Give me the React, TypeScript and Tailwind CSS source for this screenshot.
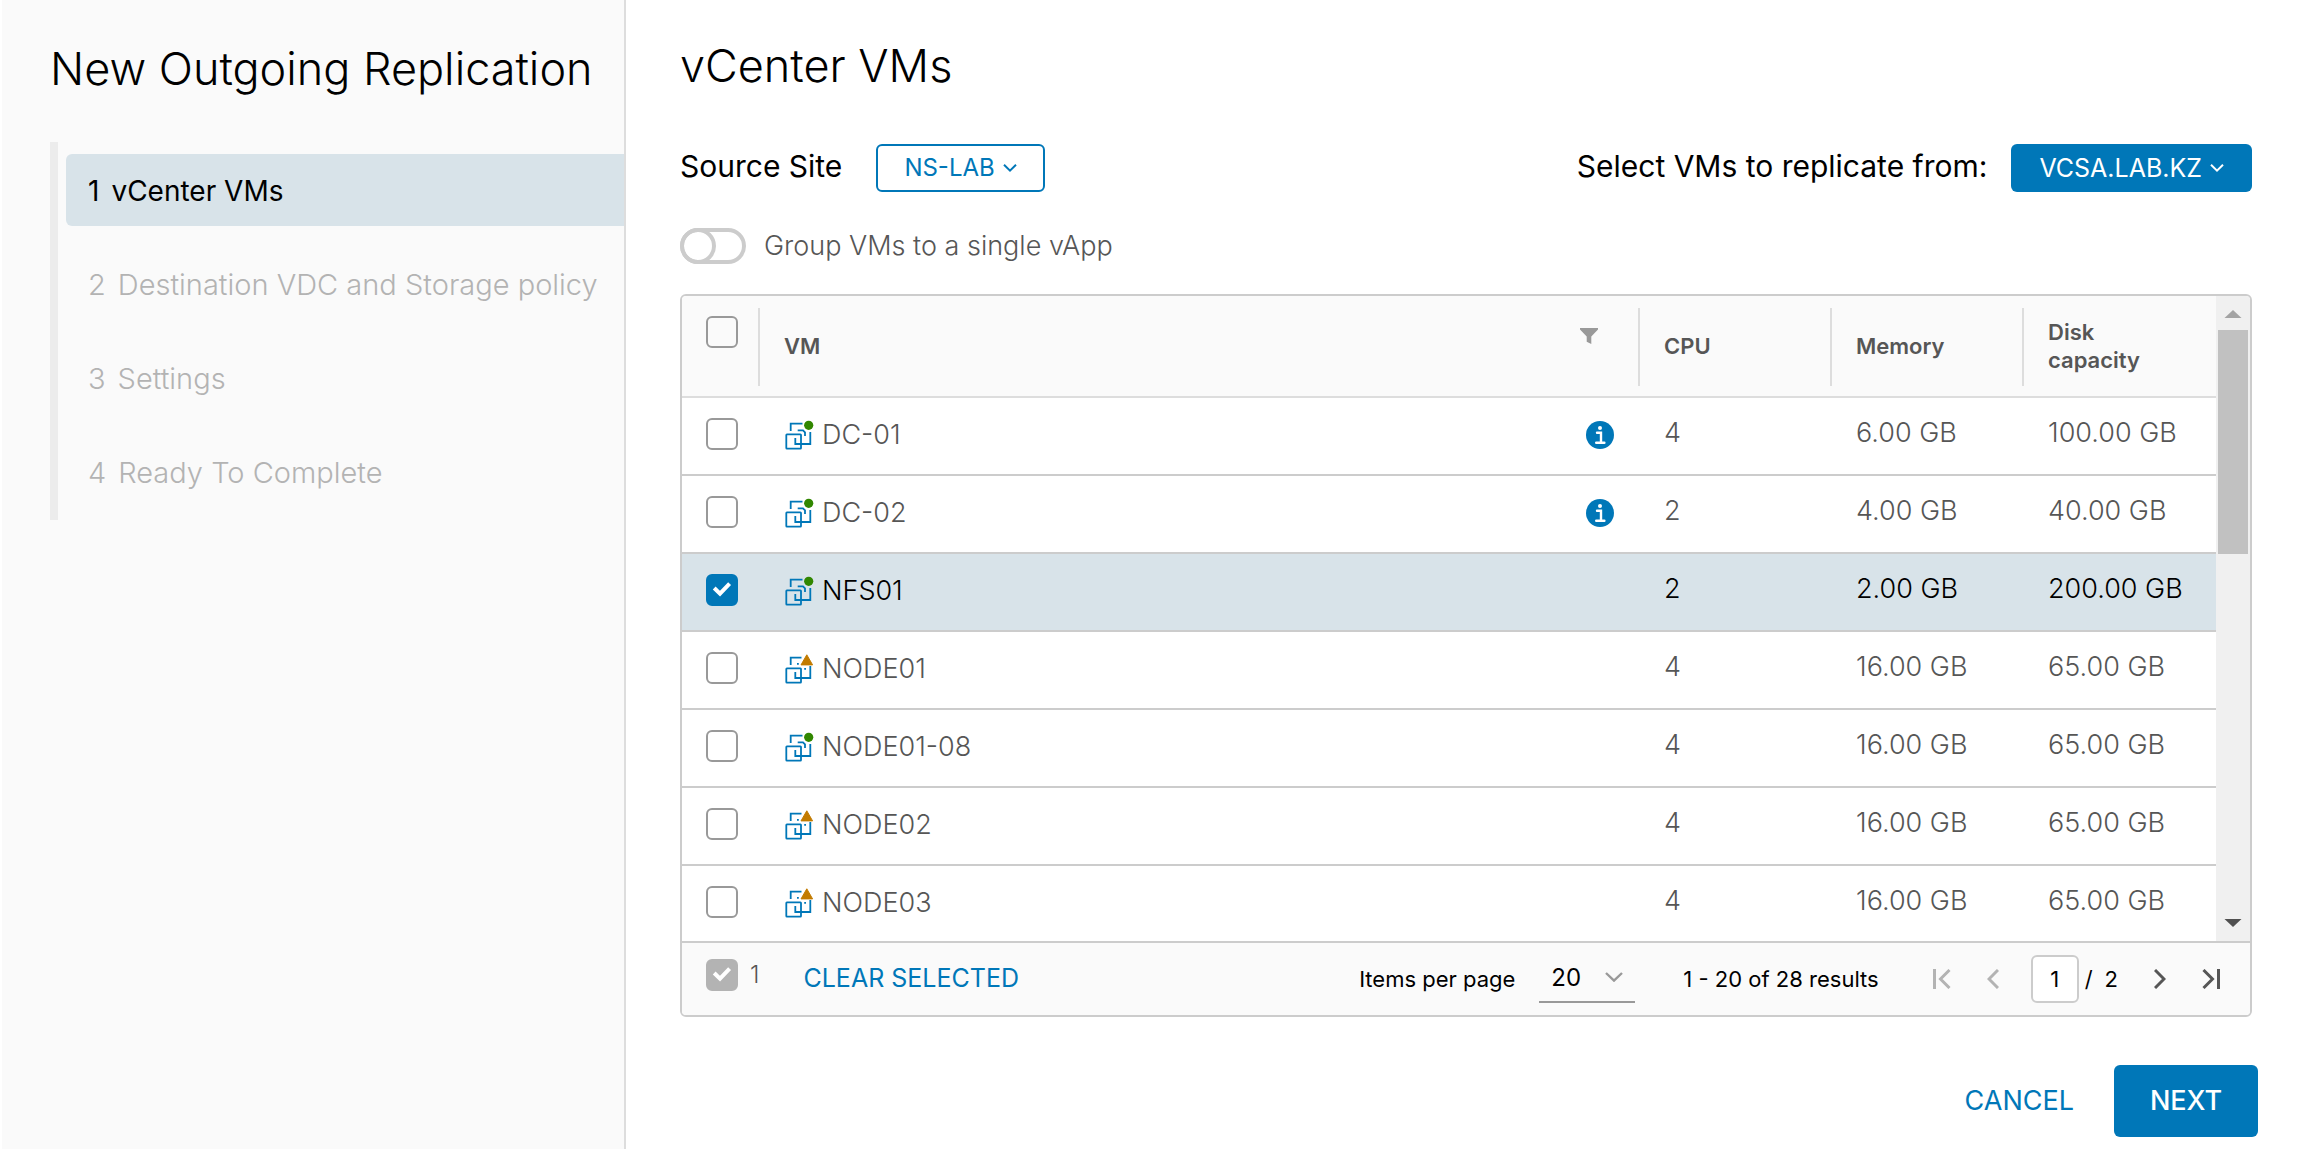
import { useState } from "react";
import clsx from "clsx";

type Vm = {
  name: string;
  status: "on" | "warning";
  info?: boolean;
  cpu: number;
  memory: string;
  disk: string;
};

const steps = ["vCenter VMs", "Destination VDC and Storage policy", "Settings", "Ready To Complete"];

const vms: Vm[] = [
  { name: "DC-01", status: "on", info: true, cpu: 4, memory: "6.00 GB", disk: "100.00 GB" },
  { name: "DC-02", status: "on", info: true, cpu: 2, memory: "4.00 GB", disk: "40.00 GB" },
  { name: "NFS01", status: "on", cpu: 2, memory: "2.00 GB", disk: "200.00 GB" },
  { name: "NODE01", status: "warning", cpu: 4, memory: "16.00 GB", disk: "65.00 GB" },
  { name: "NODE01-08", status: "on", cpu: 4, memory: "16.00 GB", disk: "65.00 GB" },
  { name: "NODE02", status: "warning", cpu: 4, memory: "16.00 GB", disk: "65.00 GB" },
  { name: "NODE03", status: "warning", cpu: 4, memory: "16.00 GB", disk: "65.00 GB" },
];

function VmIcon({ status }: { status: Vm["status"] }) {
  return (
    <svg width="30" height="30" viewBox="0 0 30 30" fill="none" stroke="#0077b8" strokeWidth="1.8" className="shrink-0">
      <rect x="2.3" y="14.3" width="14.7" height="14.3" rx="0.6" />
      <path d="M26.3 12V24H11.3V18" />
      {status === "on" ? (
        <>
          <path d="M6.7 11V3.7H18.5M13.7 10.3H19L21 12.3V16" />
          <circle cx="24.7" cy="5.3" r="4.6" fill="#318700" stroke="none" />
        </>
      ) : (
        <>
          <path d="M6.7 11V3.7H17.5M13 9.8H14.8M20.2 14.8H22" />
          <path d="M22.8 0.8L28.6 10.9H17Z" fill="#c27b00" stroke="#c27b00" strokeWidth="1" strokeLinejoin="round" />
        </>
      )}
    </svg>
  );
}

function InfoIcon() {
  return (
    <svg width="28" height="28" viewBox="0 0 28 28" className="shrink-0">
      <circle cx="14" cy="14" r="14" fill="#0077b8" />
      <circle cx="14" cy="7" r="2" fill="#fff" />
      <path d="M11 11.8H15V21.6M10.2 21.8H18.4" fill="none" stroke="#fff" strokeWidth="2.4" strokeLinecap="round" />
    </svg>
  );
}

function Caret() {
  return (
    <svg width="14" height="8" viewBox="0 0 14 8" fill="none" stroke="currentColor" strokeWidth="2">
      <path d="M1 0.8L7 6.6L13 0.8" />
    </svg>
  );
}

function Checkbox(props: { label: string; checked: boolean; disabled?: boolean; onChange?: () => void }) {
  return (
    <span className="relative block size-8">
      <input
        type="checkbox"
        aria-label={props.label}
        checked={props.checked}
        disabled={props.disabled}
        onChange={() => props.onChange?.()}
        className="block size-8 appearance-none rounded-md border-2 border-[#999999] checked:border-[#0077b8] checked:bg-[#0077b8] disabled:border-[#b3b3b3] disabled:bg-[#b3b3b3]"
      />
      {props.checked && (
        <svg viewBox="0 0 32 32" fill="none" stroke="#fff" strokeWidth="4" className="pointer-events-none absolute inset-0">
          <path d="M8.2 14L14 19.6L23.6 9.6" />
        </svg>
      )}
    </span>
  );
}

function HeaderCell({ children }: { children: React.ReactNode }) {
  return (
    <div className="mt-3 mb-[10px] flex h-[78px] items-center border-l-2 border-[#dddddd] pb-[3px] pl-6">{children}</div>
  );
}

function Sidebar() {
  return (
    <aside className="ml-[2px] w-[624px] shrink-0 border-r-2 border-[#dddddd] bg-[#fafafa] pt-[43px]">
      <h1 className="ml-12 text-[45px] leading-[52px] font-light whitespace-nowrap">New Outgoing Replication</h1>
      <ol className="mt-[47px] ml-12 flex flex-col gap-[22px] border-l-8 border-[#ececec] py-3 pl-2">
        {steps.map((step, i) => (
          <li key={step}>
            <button
              disabled={i > 0}
              className={clsx(
                "flex h-[72px] w-full items-center gap-3 rounded-l-md pt-[2px] pl-[22px] whitespace-nowrap",
                i === 0 ? "bg-[#d8e3e9] text-[28px] text-black" : "text-[29px] font-light text-[#b3b3b3]"
              )}
            >
              <span>{i + 1}</span>
              <span>{step}</span>
            </button>
          </li>
        ))}
      </ol>
    </aside>
  );
}

function VmTable({ selected, toggle }: { selected: string[]; toggle: (name: string) => void }) {
  return (
    <table className="w-full table-fixed border-separate border-spacing-0 text-left">
      <thead>
        <tr className="bg-[#fafafa] text-[22px] leading-7 text-[#565656] *:border-b-2 *:border-[#dddddd] *:p-0 *:font-semibold">
          <th className="w-[76px] align-top">
            <div className="pt-5 pl-6">
              <Checkbox label="Select all" checked={false} />
            </div>
          </th>
          <th>
            <HeaderCell>
              <span>VM</span>
              <button aria-label="Filter VM" className="mr-10 mb-5 ml-auto">
                <svg width="18" height="16" viewBox="0 0 18 16" fill="#999">
                  <path d="M0 0H18V1.6L11.3 8.4V16L6.7 13.8V8.4L0 1.6Z" />
                </svg>
              </button>
            </HeaderCell>
          </th>
          <th className="w-48"><HeaderCell>CPU</HeaderCell></th>
          <th className="w-48"><HeaderCell>Memory</HeaderCell></th>
          <th className="w-[194px]"><HeaderCell><span className="pr-12">Disk capacity</span></HeaderCell></th>
        </tr>
      </thead>
      <tbody>
        {vms.map((vm) => {
          const checked = selected.includes(vm.name);
          return (
            <tr
              key={vm.name}
              className={clsx(
                "text-[27px] font-light *:h-[78px] *:border-b-2 *:border-[#cccccc] *:py-0",
                checked ? "bg-[#d8e3e9] text-black" : "text-[#565656]"
              )}
            >
              <td className="pl-6">
                <div className="pb-1">
                  <Checkbox label={vm.name} checked={checked} onChange={() => toggle(vm.name)} />
                </div>
              </td>
              <td className="pr-6 pl-[26px]">
                <div className="flex items-center gap-2 pb-[2px]">
                  <VmIcon status={vm.status} />
                  <span className="mr-auto">{vm.name}</span>
                  {vm.info && <InfoIcon />}
                </div>
              </td>
              <td className="pl-[26px]"><div className="pb-[6px]">{vm.cpu}</div></td>
              <td className="pl-[26px]"><div className="pb-[6px]">{vm.memory}</div></td>
              <td className="pl-[26px] whitespace-nowrap"><div className="pb-[6px]">{vm.disk}</div></td>
            </tr>
          );
        })}
      </tbody>
    </table>
  );
}

function ScrollTrack() {
  return (
    <div className="flex w-[34px] shrink-0 flex-col items-center bg-[#f0f0f0] pt-[14px] pb-[14px]">
      <svg width="18" height="8" viewBox="0 0 18 8" fill="#a3a3a3">
        <path d="M9 0L17.5 8H0.5Z" />
      </svg>
      <div className="mt-3 h-56 w-[30px] bg-[#c1c1c1]" />
      <svg width="18" height="8" viewBox="0 0 18 8" fill="#505050" className="mt-auto">
        <path d="M0.5 0H17.5L9 8Z" />
      </svg>
    </div>
  );
}

function Pager() {
  return (
    <div className="flex items-center text-[22px]">
      <button aria-label="First page" disabled className="text-[#b3b3b3]">
        <svg width="18" height="20" viewBox="0 0 18 20" fill="none" stroke="currentColor" strokeWidth="3">
          <path d="M1.5 0V20M16.5 1L7.5 10L16.5 19" />
        </svg>
      </button>
      <button aria-label="Previous page" disabled className="ml-9 text-[#b3b3b3]">
        <svg width="12" height="20" viewBox="0 0 12 20" fill="none" stroke="currentColor" strokeWidth="3">
          <path d="M11 1L2 10L11 19" />
        </svg>
      </button>
      <input
        aria-label="Current page"
        defaultValue="1"
        className="ml-8 size-12 rounded-md border-2 border-[#cccccc] bg-white text-center"
      />
      <span className="ml-[6px] flex gap-3">
        <span>/</span>
        <span>2</span>
      </span>
      <button aria-label="Next page" className="ml-9 text-[#565656]">
        <svg width="12" height="20" viewBox="0 0 12 20" fill="none" stroke="currentColor" strokeWidth="3">
          <path d="M1 1L10 10L1 19" />
        </svg>
      </button>
      <button aria-label="Last page" className="ml-9 text-[#565656]">
        <svg width="18" height="20" viewBox="0 0 18 20" fill="none" stroke="currentColor" strokeWidth="3">
          <path d="M1.5 1L10.5 10L1.5 19M16.5 0V20" />
        </svg>
      </button>
    </div>
  );
}

export default function App() {
  const [selected, setSelected] = useState<string[]>(["NFS01"]);

  const toggle = (name: string) => {
    setSelected((prev) => (prev.includes(name) ? prev.filter((n) => n !== name) : [...prev, name]));
  };

  return (
    <div className="flex min-h-screen bg-white font-[Inter,sans-serif] text-black">
      <Sidebar />
      <main className="flex min-w-0 flex-1 flex-col pt-10 pr-[47px] pb-3 pl-[54px]">
        <h2 className="text-[45px] leading-[52px] font-light">vCenter VMs</h2>

        <div className="mt-[52px] mr-[6px] flex items-start text-[30px] leading-[44px]">
          <span className="mr-[34px]">Source Site</span>
          <button className="flex h-12 items-center gap-2 rounded-md border-2 border-[#0077b8] px-[26px] text-[24px] text-[#0077b8]">
            NS-LAB <Caret />
          </button>
          <span className="mr-6 ml-auto">Select VMs to replicate from:</span>
          <button className="flex h-12 items-center gap-2 rounded-md bg-[#0077b8] px-7 text-[25px] text-white">
            VCSA.LAB.KZ <Caret />
          </button>
        </div>

        <label className="mt-9 flex items-center gap-[18px] self-start text-[27px] leading-9 font-light text-[#565656]">
          <input
            type="checkbox"
            role="switch"
            className="h-9 w-[66px] appearance-none rounded-full border-4 border-[#cccccc] before:-mt-1 before:-ml-1 before:block before:size-9 before:rounded-full before:border-4 before:border-[#cccccc] checked:before:ml-[26px]"
          />
          Group VMs to a single vApp
        </label>

        <section className="mt-[30px] mr-[6px] overflow-hidden rounded-md border-2 border-[#cccccc]">
          <div className="flex">
            <div className="max-h-[645px] min-w-0 flex-1 overflow-y-auto [scrollbar-width:none]">
              <VmTable selected={selected} toggle={toggle} />
            </div>
            <ScrollTrack />
          </div>
          <div className="flex h-[74px] items-center border-t-2 border-[#cccccc] bg-[#fafafa] pr-[30px] pl-6 text-[22px]">
            <div className="flex items-center gap-3 pb-2">
              <Checkbox label="Selected rows" checked={selected.length > 0} disabled />
              <span className="text-[24px] font-light text-[#565656]">{selected.length}</span>
            </div>
            <button className="ml-11 text-[25px] text-[#0077b8]" onClick={() => setSelected([])}>
              CLEAR SELECTED
            </button>
            <label htmlFor="page-size" className="mr-6 ml-auto">Items per page</label>
            <div className="relative mr-12">
              <select
                id="page-size"
                defaultValue="20"
                className="h-12 w-24 appearance-none border-b-2 border-[#999999] bg-transparent pl-3 text-[24px]"
              >
                <option>10</option>
                <option>20</option>
                <option>50</option>
              </select>
              <svg
                width="18"
                height="10"
                viewBox="0 0 18 10"
                fill="none"
                stroke="#999"
                strokeWidth="2.4"
                className="pointer-events-none absolute top-[17px] right-3"
              >
                <path d="M1 1L9 8.6L17 1" />
              </svg>
            </div>
            <span className="mr-[54px]">1 - 20 of 28 results</span>
            <Pager />
          </div>
        </section>

        <div className="mt-12 flex items-center justify-end text-[27px]">
          <button className="mr-10 text-[#0077b8]">CANCEL</button>
          <button className="h-[72px] min-w-36 rounded-md bg-[#0077b8] px-8 font-medium text-white">NEXT</button>
        </div>
      </main>
    </div>
  );
}
